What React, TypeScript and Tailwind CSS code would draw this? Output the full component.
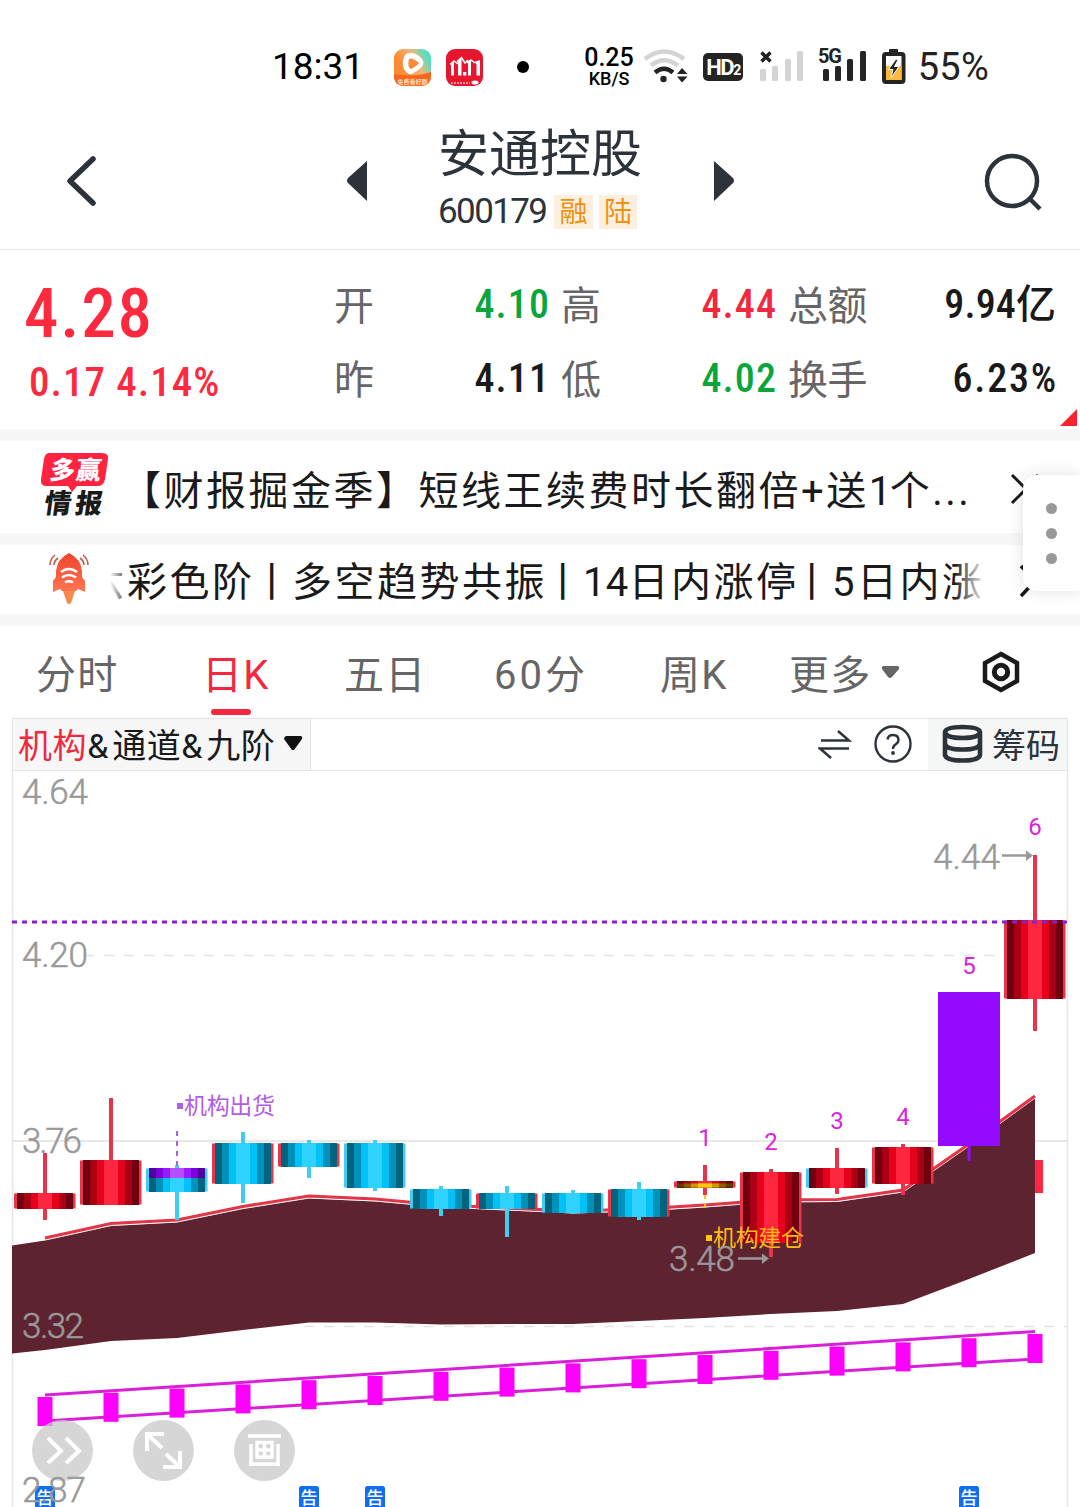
import clsx from "clsx";

type Palette = [string, string, string, string];

type Candle = {
  high: number;
  low: number;
  top: number;
  bottom: number;
  tone: "red" | "cyan" | "purple";
  edge?: "red" | "cyan";
};

const STEP = 66;
const FIRST = 45;
const cx = (i: number) => FIRST + i * STEP;

// dark -> bright, from the rim of the candle to its middle
const palettes: Record<string, Palette> = {
  red: ["#6f000f", "#aa0013", "#e6001b", "#ff263f"],
  cyan: ["#00647f", "#0091ba", "#00c2f6", "#30d3ff"],
  violet: ["#5300a0", "#7d00de", "#9a1aff", "#b64fff"],
  gold: ["#5e3d00", "#8a6100", "#cf9a00", "#ffc814"],
};

const edgeColors = { red: "#e8344a", cyan: "#41cdf2" };

const candles: Candle[] = [
  { high: 1153, low: 1220, top: 1193, bottom: 1209, tone: "red" },
  { high: 1098, low: 1205, top: 1160, bottom: 1205, tone: "red" },
  { high: 1165, low: 1220, top: 1168, bottom: 1192, tone: "cyan" },
  { high: 1132, low: 1203, top: 1143, bottom: 1184, tone: "cyan", edge: "red" },
  { high: 1140, low: 1178, top: 1143, bottom: 1167, tone: "cyan", edge: "red" },
  { high: 1140, low: 1191, top: 1143, bottom: 1188, tone: "cyan" },
  { high: 1186, low: 1216, top: 1189, bottom: 1209, tone: "cyan" },
  { high: 1186, low: 1237, top: 1193, bottom: 1209, tone: "cyan", edge: "red" },
  { high: 1190, low: 1214, top: 1193, bottom: 1213, tone: "cyan" },
  { high: 1182, low: 1220, top: 1189, bottom: 1217, tone: "cyan", edge: "red" },
  { high: 1165, low: 1195, top: 1181, bottom: 1188, tone: "red" },
  { high: 1169, low: 1257, top: 1172, bottom: 1243, tone: "red" },
  { high: 1148, low: 1194, top: 1168, bottom: 1188, tone: "red", edge: "cyan" },
  { high: 1144, low: 1195, top: 1147, bottom: 1184, tone: "red" },
  { high: 992, low: 1161, top: 992, bottom: 1146, tone: "purple" },
  { high: 855, low: 1031, top: 920, bottom: 999, tone: "red" },
];

const upper = [1238, 1223.5, 1220, 1206.5, 1196, 1199, 1205, 1208, 1211, 1209, 1205, 1200, 1199.5, 1190, 1144, 1096];
const lower = [1350, 1341, 1338, 1330, 1322.5, 1322.5, 1324.5, 1324, 1324, 1321, 1318, 1314, 1311, 1304, 1279, 1253];

const counts = [
  { i: 10, n: "1", y: 1146 },
  { i: 11, n: "2", y: 1150 },
  { i: 12, n: "3", y: 1129 },
  { i: 13, n: "4", y: 1125 },
  { i: 14, n: "5", y: 974 },
  { i: 15, n: "6", y: 835 },
];

const priceLabels = [
  { t: "4.64", y: 804, w: 66 },
  { t: "4.20", y: 967, w: 66 },
  { t: "3.76", y: 1153, w: 60 },
  { t: "3.32", y: 1338, w: 62 },
  { t: "2.87", y: 1502, w: 64 },
];

function Stripes({ x, top, bottom, colors }: { x: number; top: number; bottom: number; colors: Palette }) {
  const h = bottom - top;
  return (
    <>
      <rect x={x - 28} y={top} width={56} height={h} fill={colors[0]} />
      <rect x={x - 21} y={top} width={42} height={h} fill={colors[1]} />
      <rect x={x - 14} y={top} width={28} height={h} fill={colors[2]} />
      <rect x={x - 7} y={top} width={14} height={h} fill={colors[3]} />
    </>
  );
}

function CandleShape({ candle, x }: { candle: Candle; x: number }) {
  const { high, low, top, bottom, tone } = candle;
  if (tone === "purple") {
    return (
      <g fill="#940aff">
        <rect x={x - 31} y={top} width={62} height={bottom - top} />
        <rect x={x - 1.5} y={bottom} width={3} height={low - bottom} />
      </g>
    );
  }
  const edge = edgeColors[candle.edge ?? tone];
  return (
    <g>
      <rect x={x - 2} y={high} width={4} height={low - high} fill={edgeColors[tone]} />
      <rect x={x - 31} y={top + 0.5} width={61.5} height={bottom - top - 1} fill={edge} />
      <Stripes x={x} top={top} bottom={bottom} colors={palettes[tone]} />
    </g>
  );
}

function KLineChart() {
  const band = [
    "12,1245.5",
    ...upper.map((y, i) => `${cx(i)},${y + 2.5}`),
    ...lower.map((y, i) => `${cx(i)},${y}`).reverse(),
    "12,1353.5",
  ].join(" ");
  const line = upper.map((y, i) => `${cx(i)},${y}`).join(" ");

  return (
    <svg className="block h-[736px] w-[1080px] font-['Roboto','Noto_Sans_CJK_SC',sans-serif]" viewBox="0 771 1080 736">
      <path d="M12.5 771V1507M1067.5 771V1507" stroke="#e6e6e6" strokeWidth="1.5" />
      <path d="M13 1141H1067" stroke="#e8e8e8" strokeWidth="2" />
      <path d="M84 955.5H1000M304 1326.5H1067" stroke="#e4e4e4" strokeWidth="1.5" strokeDasharray="10 10" />

      <polygon points={band} fill="#5e2331" />
      <polyline points={line} fill="none" stroke="#fff" strokeWidth="1" transform="translate(0 2)" opacity="0.5" />
      <polyline points={line} fill="none" stroke="#e23548" strokeWidth="3.2" />
      <rect x="1035" y="1160" width="8" height="33" fill="#ff263f" />

      {/* 底部通道 */}
      <path d="M45 1395L1035 1331.5M45 1421L1035 1359" stroke="#d91fd9" strokeWidth="3" fill="none" />
      {candles.map((_, i) => (
        <rect key={i} x={cx(i) - 7.5} y={1397 - i * 4.2} width={15} height={29} fill="#fc00fc" />
      ))}

      {candles.map((c, i) => (
        <CandleShape key={i} candle={c} x={cx(i)} />
      ))}
      <Stripes x={177} top={1168} bottom={1178} colors={palettes.violet} />
      <Stripes x={705} top={1183.5} bottom={1187.5} colors={palettes.gold} />

      <path d="M177 1131V1166" stroke="#b15de8" strokeWidth="2" strokeDasharray="5 5" />
      <path d="M705 1195V1210" stroke="#ffc414" strokeWidth="2" strokeDasharray="4 5" />
      <path d="M12 922H1067" stroke="#8d1fc4" strokeWidth="3.2" strokeDasharray="5 5" />

      <rect x="177" y="1103" width="6" height="6" fill="#b15de8" />
      <text x="184" y="1113.5" fontSize="23" fill="#b15de8" textLength="91">机构出货</text>
      <rect x="706" y="1235" width="6" height="6" fill="#ffc414" />
      <text x="713" y="1245.5" fontSize="23" fill="#ffb914" textLength="91">机构建仓</text>

      {counts.map((c) => (
        <text key={c.n} x={cx(c.i)} y={c.y} fontSize="24" fill="#db1fdb" textAnchor="middle">{c.n}</text>
      ))}

      <g fill="#999" stroke="#999" strokeWidth="0.5" fontSize="35" fontWeight="300">
        <text x="933" y="868.5" textLength="67">4.44</text>
        <text x="669" y="1271" textLength="66">3.48</text>
      </g>
      <path d="M1002 855.5H1028M738 1258.5H764" stroke="#999" strokeWidth="2.4" />
      <path d="M1026 850.5L1033 855.5L1026 861ZM762 1253.5L769 1258.5L762 1264Z" fill="#999" />

      {[0, 4, 5, 14].map((i) => (
        <g key={i}>
          <rect x={cx(i) - 10} y="1486" width="20" height="24" rx="2.5" fill="#0f6ff0" />
          <text x={cx(i)} y="1504" fontSize="17" fill="#fff" textAnchor="middle" fontWeight="500">告</text>
        </g>
      ))}
    </svg>
  );
}

// 价格刻度叠在悬浮按钮之上
function PriceAxis() {
  return (
    <svg className="pointer-events-none absolute left-0 top-0 h-[736px] w-[100px] font-['Roboto',sans-serif]" viewBox="0 771 100 736">
      {priceLabels.map((p) => (
        <text key={p.t} x="22" y={p.y} fontSize="35" fontWeight="300" fill="#999" stroke="#999" strokeWidth="0.5" textLength={p.w}>{p.t}</text>
      ))}
    </svg>
  );
}

function ChartButtons() {
  const circle = "flex size-[61px] items-center justify-center rounded-full bg-[#c8c8c8]/75";
  return (
    <div className="absolute left-8 top-[649px] flex gap-10">
      <button className={circle}>
        <svg width="61" height="61" fill="none" stroke="#fff" strokeWidth="4">
          <path d="M16 18L29 31L16 43M34 18L47 31L34 43" />
        </svg>
      </button>
      <button className={circle}>
        <svg width="61" height="61" fill="none" stroke="#fff" strokeWidth="4">
          <path d="M14 31V14H31M15 15L29 28M47 31V47H30M33 34L46 46" />
        </svg>
      </button>
      <button className={circle}>
        <svg width="61" height="61" fill="none" stroke="#fff" strokeWidth="3.4">
          <path d="M14 16H47M17 24V46M44 24V46M15 44H46M23 22.5H38V37H23ZM30.5 22V37M23 30H38" />
        </svg>
      </button>
    </div>
  );
}

function Signal({ bars, className }: { bars: number[]; className: string }) {
  return (
    <span className="flex items-end gap-[6.3px]">
      {bars.map((h, i) => (
        <span key={i} className={clsx("w-[6px] rounded-[1.5px]", className)} style={{ height: h }} />
      ))}
    </span>
  );
}

function StatusBar() {
  return (
    <div className="flex h-[110px] items-start pt-[46px] font-['Roboto',sans-serif] text-black">
      <span className="ml-[272px] w-[122px] text-[37px] leading-[42px]">18:31</span>
      <svg className="mt-[3px] shrink-0" width="37" height="37" viewBox="0 0 37 37">
        <defs>
          <linearGradient id="app" x1="0" y1="0.5" x2="1" y2="0">
            <stop offset="0.15" stopColor="#ff8a35" />
            <stop offset="0.55" stopColor="#f0b77b" />
            <stop offset="0.85" stopColor="#4fe0c4" />
          </linearGradient>
          <clipPath id="app-clip">
            <rect width="37" height="37" rx="9" />
          </clipPath>
        </defs>
        <g clipPath="url(#app-clip)">
          <rect width="37" height="37" fill="url(#app)" />
          <path d="M0 25Q18 29 37 23V37H0Z" fill="#f9641f" />
          <path d="M12 5Q16 3 22 5Q29 9 29.500 14Q29 19 18 25Q13 26 10 20Q7 11 12 5Z" fill="#fff" />
          <path d="M15 10Q18 8 25 14Q23 17 17 20Q13 18 15 10Z" fill="#f98b3a" />
          <text x="18.500" y="34.500" fontSize="6" fill="#ffe3c4" textAnchor="middle" className="font-['Noto_Sans_CJK_SC',sans-serif] font-bold">免费看好剧</text>
        </g>
      </svg>
      <svg className="ml-[15px] mt-[3px] shrink-0" width="37" height="37" viewBox="0 0 37 37">
        <rect width="37" height="37" rx="9" fill="#e5162e" />
        <path d="M3.500 15L8 11V26.500H5V16ZM10.500 12L15.500 8V26.500H12V14ZM20.500 13L25 10V26.500H22V15ZM28 13L34 11V26.500H30.500V15Z" fill="#fff" />
        <path d="M8 12L12 15M15 8L19 14L22 11M25 11L29 14" stroke="#fff" strokeWidth="1.500" fill="none" />
        <rect x="17" y="23" width="3.300" height="3.500" fill="#fff" />
        <path d="M5 34H24" stroke="#ffb4b4" strokeWidth="1.500" strokeDasharray="2 1" />
        <ellipse cx="29" cy="33.500" rx="3.500" ry="2" fill="#fff" />
      </svg>
      <span className="ml-[34px] mt-[15px] size-3 shrink-0 rounded-full bg-black" />
      <div className="ml-[52px] flex w-[56px] shrink-0 flex-col items-center font-medium">
        <span className="text-[25px] leading-[24px]">0.25</span>
        <span className="text-[18px] leading-[17px]">KB/S</span>
      </div>
      <svg className="ml-[6px] mt-[1px] shrink-0" width="46" height="40" viewBox="0 0 46 40" fill="none">
        <path d="M2 12Q21 -3 41 12" stroke="#d4d4d4" strokeWidth="4.500" />
        <path d="M8 18.500Q21 8 35 18.500" stroke="#d4d4d4" strokeWidth="4.500" />
        <path d="M12 25.500Q21 18 30 25.500" stroke="#222" strokeWidth="4.500" />
        <circle cx="20.500" cy="32" r="3.200" fill="#222" />
        <path d="M39 21L44.500 27H34ZM34 29.500H44.500L39 35.500Z" fill="#222" />
      </svg>
      <span className="ml-[14px] mt-[7px] flex h-[28px] w-[40px] shrink-0 items-center justify-center rounded-[5px] bg-[#242424] text-[22px] font-bold tracking-[-1.5px] text-white">
        HD<sub className="bottom-[-3px] text-[14px]">2</sub>
      </span>
      <span className="relative ml-[17px] mt-[5px]">
        <Signal bars={[12, 15, 22, 30]} className="bg-[#d4d4d4]" />
        <svg className="absolute left-0 top-0" width="12" height="12" stroke="#222" strokeWidth="3.400">
          <path d="M1.500 1.500L10.500 10.500M10.500 1.500L1.500 10.500" />
        </svg>
      </span>
      <span className="relative ml-[20px] mt-[5px]">
        <Signal bars={[12, 15, 22, 30]} className="bg-[#242424]" />
        <span className="absolute left-[-5px] top-[-5px] text-[20px] font-bold leading-[20px] tracking-[-1px] text-[#242424]">5G</span>
      </span>
      <svg className="ml-[16px] mt-[3px] shrink-0" width="24" height="36" viewBox="0 0 24 36">
        <rect x="7" y="0" width="9" height="4" rx="1" fill="#242424" />
        <rect x="2" y="5" width="19.500" height="28" rx="2" fill="#fff" stroke="#242424" strokeWidth="4" />
        <rect x="4" y="17" width="15.500" height="14" fill="#fcb93a" />
        <path d="M14 10L6.500 20.500H11L9 29L17 17.500H12.500L16 11Z" fill="#242424" stroke="#fff" strokeWidth="1" />
      </svg>
      <span className="ml-[12px] text-[38px] leading-[42px] tracking-[0.2px] text-[#222]">55%</span>
    </div>
  );
}

function Header() {
  return (
    <header className="flex h-[140px] items-start border-b border-[#e3e3e3] text-[#2d333b]">
      <svg className="ml-[64px] mt-[44px]" width="36" height="54" fill="none" stroke="currentColor" strokeWidth="5.500" strokeLinecap="round" strokeLinejoin="round">
        <path d="M29 5L6 27L29 49" />
      </svg>
      <svg className="ml-[247px] mt-[50px]" width="20" height="42" fill="currentColor">
        <path d="M20 1V41L1 23Q-1 21 1 18Z" />
      </svg>
      <div className="ml-[71px] w-[204px]">
        <h1 className="mt-[9px] h-[68px] whitespace-nowrap font-['Noto_Sans_CJK_SC',sans-serif] text-[51px] font-normal leading-[62px]">安通控股</h1>
        <div className="flex items-center">
          <span className="w-[116px] font-['Roboto',sans-serif] text-[35px] leading-[50px] tracking-[-1.6px]">600179</span>
          <span className="h-[34px] w-[39px] bg-[#fdefe0] text-center text-[28px] leading-[36px] text-[#ee920f]">融</span>
          <span className="ml-[6px] h-[34px] w-[38px] bg-[#fdefe0] text-center text-[28px] leading-[36px] text-[#ee920f]">陆</span>
        </div>
      </div>
      <svg className="ml-[72px] mt-[50px]" width="20" height="42" fill="currentColor">
        <path d="M0 1V41L19 23Q21 21 19 18Z" />
      </svg>
      <svg className="ml-[250px] mt-[43px]" width="60" height="60" fill="none" stroke="currentColor" strokeWidth="4.500">
        <circle cx="28" cy="28" r="25" />
        <path d="M46 46L56 56" />
      </svg>
    </header>
  );
}

function Stat({ label, value, color, className }: { label: string; value: string; color: string; className?: string }) {
  return (
    <div className={clsx("flex items-center justify-between", className)}>
      <span className="pt-[5px] tracking-[-0.6px] text-[#666]">{label}</span>
      <span className={clsx("pt-[2px] font-medium [font-stretch:75%]", color)}>{value}</span>
    </div>
  );
}

function Quote() {
  return (
    <section className="relative flex h-[179px] whitespace-nowrap">
      <div className="w-[334px] font-medium text-[#fd293f] [font-stretch:75%]">
        <div className="ml-[24px] mt-[24px] text-[69px] leading-[80px] tracking-[1.8px]">4.28</div>
        <div className="ml-[29px] mt-[3px] text-[41px] leading-[50px] tracking-[1px]">0.17 4.14%</div>
      </div>
      <div className="mt-[17px] grid h-[148px] grid-cols-[227px_227px_268px] grid-rows-2 text-[40px] leading-[60px]">
        <Stat label="开" value="4.10" color="text-[#0aa63c] tracking-[1.1px]" className="pr-[11px]" />
        <Stat label="高" value="4.44" color="text-[#f0293f] tracking-[1.1px]" className="pr-[11px]" />
        <Stat label="总额" value="9.94亿" color="text-[#1a1a1a] tracking-[0.1px]" />
        <Stat label="昨" value="4.11" color="text-[#1a1a1a] tracking-[1.1px]" className="pr-[11px]" />
        <Stat label="低" value="4.02" color="text-[#0aa63c] tracking-[1.1px]" className="pr-[11px]" />
        <Stat label="换手" value="6.23%" color="text-[#1a1a1a] tracking-[1.8px] -mr-[2px]" />
      </div>
      <svg className="absolute bottom-[3px] right-[3px]" width="17" height="17">
        <path d="M17 0V17H0Z" fill="#f8232f" />
      </svg>
    </section>
  );
}

function NewsRow() {
  return (
    <div className="flex h-[104px] items-center border-t-[12px] border-[#f7f7f7]">
      <svg className="mb-[6px] ml-10 shrink-0 font-['Noto_Sans_CJK_SC',sans-serif]" width="70" height="68" viewBox="0 0 70 68">
        <path d="M9 3H62Q69 3 68 9L65 29Q64 36 58 36H37L32 42L28 36H6Q0 36 1 29L4 9Q5 3 9 3Z" fill="#ff2340" />
        <text x="10" y="29" fontSize="25" fontWeight="900" fill="#fff" textLength="51" transform="skewX(-8) translate(3 0)">多赢</text>
        <text x="8" y="63" fontSize="27" fontWeight="900" fill="#1a1a1a" textLength="58" transform="skewX(-8) translate(4 0)">情报</text>
      </svg>
      <span className="ml-[11px] w-[860px] whitespace-nowrap pt-[9px] text-[40px] leading-[60px] tracking-[2.5px] text-[#1a1a1a]">
        【财报掘金季】短线王续费时长翻倍+送<span className="tracking-[-1.5px]">1</span>个...
      </span>
      <svg className="ml-[28px] mt-[2px] shrink-0" width="40" height="40" fill="none" stroke="#1a1a1a" strokeWidth="3">
        <path d="M3 7L17 21L3 35M29 7L26 10" />
      </svg>
    </div>
  );
}

function TickerRow() {
  const sep = <span className="flex w-[38px] shrink-0 justify-center">丨</span>;
  return (
    <div className="flex h-[81px] items-center border-t-[12px] border-[#f7f7f7]">
      <svg className="ml-[48px] shrink-0" width="42" height="54" viewBox="0 0 42 54">
        <defs>
          <linearGradient id="rocket" x1="0" y1="0" x2="0" y2="1">
            <stop offset="0" stopColor="#f0432a" />
            <stop offset="1" stopColor="#ff7654" />
          </linearGradient>
        </defs>
        <path d="M21 0Q33 6 34 18V24L37 28V39L30 36L28 38H14L12 36L5 39V28L8 24V18Q9 6 21 0Z" fill="url(#rocket)" />
        <path d="M15 38H27L23 50Q21 52 19 50Z" fill="#f68a4c" />
        <path d="M13 19Q21 13 29 19M14 24.500Q21 19.500 28 24.500M17 29.500Q21 27 25 29.500" fill="none" stroke="#fff" strokeWidth="2.600" />
        <path d="M2 12Q2 6 7 2M6 12Q6 8 10 5M40 12Q40 6 35 2M36 12Q36 8 32 5" fill="none" stroke="#c45a48" strokeWidth="1.600" />
      </svg>
      <div className="relative ml-[20px] flex w-[876px] justify-start overflow-hidden whitespace-nowrap pt-[7px] text-[40px] leading-[60px] tracking-[2.5px] text-[#1a1a1a]">
        <span className="ml-[-26px] w-[43px] shrink-0">六</span>
        <span className="w-[127px] shrink-0">彩色阶</span>
        {sep}
        <span className="w-[253px] shrink-0">多空趋势共振</span>
        {sep}
        <span className="w-[211px] shrink-0"><span className="tracking-[0.3px]">14</span>日内涨停</span>
        {sep}
        <span className="shrink-0">5日内涨</span>
        <span className="absolute inset-y-0 left-0 w-5 bg-linear-to-r from-white to-white/0" />
        <span className="absolute inset-y-0 right-0 w-8 bg-linear-to-l from-white to-white/0" />
      </div>
      <svg className="ml-[31px] mt-[2px] shrink-0" width="40" height="40" fill="none" stroke="#1a1a1a" strokeWidth="3.500">
        <path d="M4 5L18 20L4 35" />
      </svg>
    </div>
  );
}

const tabs = [
  { name: "分时", width: "w-[166px]" },
  { name: "日K", width: "w-[142px]", active: true },
  { name: "五日", width: "w-[150px]" },
  { name: "60分", width: "w-[166px]", spacing: "tracking-[3px]" },
  { name: "周K", width: "w-[129px]" },
];

function Tabs() {
  return (
    <nav className="flex h-[104px] border-t-[12px] border-[#f7f7f7] pl-9 text-[40px] leading-[60px] tracking-[1.2px] text-[#666]">
      {tabs.map((t) => (
        <div key={t.name} className={clsx("shrink-0 pt-[20px]", t.width, t.spacing, t.active && "text-[#f5283f]")}>
          {t.name}
          {t.active && <div className="ml-[9px] mt-[3px] h-[6px] w-[40px] rounded-full bg-[#f5283f]" />}
        </div>
      ))}
      <div className="flex w-[193px] shrink-0 pt-[20px]">
        更多
        <svg className="ml-[10px] mt-[20px]" width="19" height="13" fill="#666">
          <path d="M2 0H17Q19 1 18 3L11 11Q9 13 7 11L1 3Q0 1 2 0Z" />
        </svg>
      </div>
      <svg className="mt-[25px]" width="40" height="42" fill="none" stroke="#1a1a1a">
        <path d="M19 3L35 12V30L19 39L3 30V12Z" strokeWidth="4.500" />
        <circle cx="19" cy="21" r="6.700" strokeWidth="5" />
      </svg>
    </nav>
  );
}

function Toolbar() {
  return (
    <div className="mx-3 flex h-[53px] border border-[#e3e3e3] text-[34px] leading-[54px] text-[#1a1a1a]">
      <div className="flex w-[298px] shrink-0 whitespace-nowrap border-r border-[#e3e3e3] bg-[#f7f7f7] pl-[5px] tracking-[0.6px]">
        <span className="text-[#f0293f]">机构</span>
        <span className="w-[25px]">&amp;</span>
        <span className="w-[69px]">通道</span>
        <span className="w-[25px]">&amp;</span>
        <span className="w-[69px]">九阶</span>
        <svg className="ml-[9px] mt-[17px] shrink-0" width="19" height="16" fill="#111">
          <path d="M2 0H17Q19 1 18 3L10 14H8L0 3Q0 1 2 0Z" />
        </svg>
      </div>
      <svg className="ml-[507px] mt-[10px] shrink-0" width="34" height="32" fill="none" stroke="#2d333b" strokeWidth="2.500">
        <path d="M3 11.500H31L20 2M31 19.500H2L13 29" />
      </svg>
      <svg className="ml-[21px] mt-[5px] shrink-0" width="40" height="40" fill="none" stroke="#2d333b">
        <circle cx="20" cy="20" r="17.500" strokeWidth="2.400" />
        <path d="M14.500 15.500Q15 11 20 11Q25.500 11 25.500 16Q25.500 18.500 22.500 20.500Q20 22 20 25" strokeWidth="2.400" />
        <circle cx="20" cy="29" r="1.900" fill="#2d333b" stroke="none" />
      </svg>
      <div className="ml-[15px] flex flex-1 whitespace-nowrap bg-[#f5f6f6] pl-[14px] text-[#2d333b]">
        <svg className="mr-[9px] mt-[5px] shrink-0" width="41" height="40" fill="none" stroke="currentColor" strokeWidth="4.600">
          <path d="M3 8Q4 3 20.500 3Q37 3 38 8Q37 14 20.500 14Q4 14 3 8ZM3 8V31Q4 36.500 20.500 36.500Q37 36.500 38 31V8M3 20Q4 25.500 20.500 25.500Q37 25.500 38 20" />
        </svg>
        筹码
      </div>
    </div>
  );
}

export default function App() {
  return (
    <div className="relative h-[1507px] w-[1080px] overflow-hidden bg-white font-['Roboto','Noto_Sans_CJK_SC',sans-serif]">
      <StatusBar />
      <Header />
      <Quote />
      <NewsRow />
      <TickerRow />
      <Tabs />
      <Toolbar />
      <div className="relative">
        <KLineChart />
        <ChartButtons />
        <PriceAxis />
      </div>

      {/* 侧边悬浮菜单 */}
      <div className="absolute right-0 top-[475px] flex h-[116px] w-[57px] flex-col items-center justify-center gap-[14px] rounded-l-[14px] bg-white shadow-[0_0_16px_rgba(0,0,0,0.12)]">
        <span className="size-[11px] rounded-full bg-[#999]" />
        <span className="size-[11px] rounded-full bg-[#999]" />
        <span className="size-[11px] rounded-full bg-[#999]" />
      </div>
    </div>
  );
}
